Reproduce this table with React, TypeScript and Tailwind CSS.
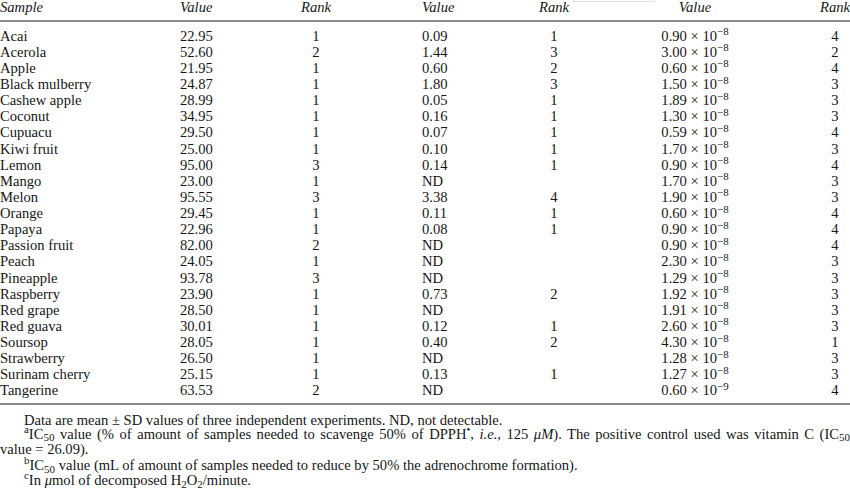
import React from "react";

type Row = [string, string, string, string, string, string, string, string];

const rows: Row[] = [
  ["Acai", "22.95", "1", "0.09", "1", "0.90", "8", "4"],
  ["Acerola", "52.60", "2", "1.44", "3", "3.00", "8", "2"],
  ["Apple", "21.95", "1", "0.60", "2", "0.60", "8", "4"],
  ["Black mulberry", "24.87", "1", "1.80", "3", "1.50", "8", "3"],
  ["Cashew apple", "28.99", "1", "0.05", "1", "1.89", "8", "3"],
  ["Coconut", "34.95", "1", "0.16", "1", "1.30", "8", "3"],
  ["Cupuacu", "29.50", "1", "0.07", "1", "0.59", "8", "4"],
  ["Kiwi fruit", "25.00", "1", "0.10", "1", "1.70", "8", "3"],
  ["Lemon", "95.00", "3", "0.14", "1", "0.90", "8", "4"],
  ["Mango", "23.00", "1", "ND", "", "1.70", "8", "3"],
  ["Melon", "95.55", "3", "3.38", "4", "1.90", "8", "3"],
  ["Orange", "29.45", "1", "0.11", "1", "0.60", "8", "4"],
  ["Papaya", "22.96", "1", "0.08", "1", "0.90", "8", "4"],
  ["Passion fruit", "82.00", "2", "ND", "", "0.90", "8", "4"],
  ["Peach", "24.05", "1", "ND", "", "2.30", "8", "3"],
  ["Pineapple", "93.78", "3", "ND", "", "1.29", "8", "3"],
  ["Raspberry", "23.90", "1", "0.73", "2", "1.92", "8", "3"],
  ["Red grape", "28.50", "1", "ND", "", "1.91", "8", "3"],
  ["Red guava", "30.01", "1", "0.12", "1", "2.60", "8", "3"],
  ["Soursop", "28.05", "1", "0.40", "2", "4.30", "8", "1"],
  ["Strawberry", "26.50", "1", "ND", "", "1.28", "8", "3"],
  ["Surinam cherry", "25.15", "1", "0.13", "1", "1.27", "8", "3"],
  ["Tangerine", "63.53", "2", "ND", "", "0.60", "9", "4"],
];

const grid = "grid grid-cols-[180px_100px_72px_170px_64px_218px_46px]";

export default function App() {
  return (
    <div className="relative w-[850px] h-[496px] overflow-hidden bg-white text-[#161616] font-['Liberation_Serif',serif] text-[14.6px]">
      <div className="absolute left-[573px] top-0 w-[82px] h-[2px] border-b border-x border-[#e2e2e2]" />
      {/* header */}
      <div className={`${grid} h-[22px] leading-[14px] italic border-b-2 border-[#8c8c8c] whitespace-nowrap`}>
        <div>Sample</div>
        <div>Value</div>
        <div className="text-center">Rank</div>
        <div className="pl-[70px]">Value</div>
        <div className="text-center">Rank</div>
        <div className="text-center">Value</div>
        <div className="pl-[16px] text-center">Rank</div>
      </div>
      {/* body */}
      <div className="pt-[5.7px] pb-[4.4px] border-b-2 border-[#8c8c8c]">
        {rows.map((r) => (
          <div key={r[0]} className={`${grid} h-[16.14px] leading-[16.14px] whitespace-nowrap`}>
            <div>{r[0]}</div>
            <div>{r[1]}</div>
            <div className="text-center">{r[2]}</div>
            <div className="pl-[70px]">{r[3]}</div>
            <div className="text-center">{r[4]}</div>
            <div className="text-center">
              {r[5]}&nbsp;×&nbsp;10<sup>−{r[6]}</sup>
            </div>
            <div className="pl-[16px] text-center">{r[7]}</div>
          </div>
        ))}
      </div>
      {/* footnotes */}
      <div className="mt-[9.3px]">
        <p className="pl-[24px] leading-[13px] whitespace-nowrap">
          Data are mean ± SD values of three independent experiments. ND, not detectable.
        </p>
        <p className="pl-[24px] leading-[15px] mt-[-0.7px] text-justify [text-align-last:justify] whitespace-nowrap">
          <sup>a</sup>IC<sub>50</sub> value (% of amount of samples needed to scavenge 50% of DPPH<sup>•</sup>,{" "}
          <i>i.e.,</i> 125 <i>μM</i>). The positive control used was vitamin C (IC<sub>50</sub>
        </p>
        <p className="leading-[15px]">value = 26.09).</p>
        <p className="pl-[24px] leading-[15px] mt-[1.4px] whitespace-nowrap">
          <sup>b</sup>IC<sub>50</sub> value (mL of amount of samples needed to reduce by 50% the adrenochrome formation).
        </p>
        <p className="pl-[24px] leading-[15px]">
          <sup>c</sup>In <i>μ</i>mol of decomposed H<sub>2</sub>O<sub>2</sub>/minute.
        </p>
      </div>
    </div>
  );
}
